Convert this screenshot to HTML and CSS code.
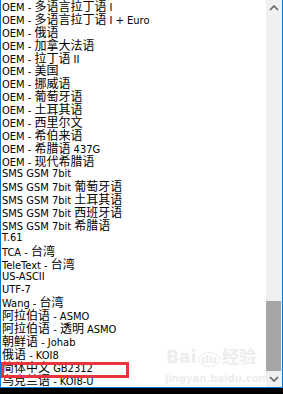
FILE: index.html
```html
<!DOCTYPE html>
<html lang="zh-CN">
<head>
    <meta charset="UTF-8">
    <title>编码列表</title>
    <link rel="stylesheet" href="styles.css">
</head>
<body>
    <div class="dropdown">
        <ul class="options">
            <li>OEM - <span class="zh">多语言拉丁语</span> I</li>
            <li>OEM - <span class="zh">多语言拉丁语</span> I + Euro</li>
            <li>OEM - <span class="zh">俄语</span></li>
            <li>OEM - <span class="zh">加拿大法语</span></li>
            <li>OEM - <span class="zh">拉丁语</span> II</li>
            <li>OEM - <span class="zh">美国</span></li>
            <li>OEM - <span class="zh">挪威语</span></li>
            <li>OEM - <span class="zh">葡萄牙语</span></li>
            <li>OEM - <span class="zh">土耳其语</span></li>
            <li>OEM - <span class="zh">西里尔文</span></li>
            <li>OEM - <span class="zh">希伯来语</span></li>
            <li>OEM - <span class="zh">希腊语</span> 437G</li>
            <li>OEM - <span class="zh">现代希腊语</span></li>
            <li>SMS GSM 7bit</li>
            <li>SMS GSM 7bit <span class="zh">葡萄牙语</span></li>
            <li>SMS GSM 7bit <span class="zh">土耳其语</span></li>
            <li>SMS GSM 7bit <span class="zh">西班牙语</span></li>
            <li>SMS GSM 7bit <span class="zh">希腊语</span></li>
            <li>T.61</li>
            <li>TCA - <span class="zh">台湾</span></li>
            <li>TeleText - <span class="zh">台湾</span></li>
            <li>US-ASCII</li>
            <li>UTF-7</li>
            <li>Wang - <span class="zh">台湾</span></li>
            <li><span class="zh">阿拉伯语</span> - ASMO</li>
            <li><span class="zh">阿拉伯语</span> - <span class="zh">透明</span> ASMO</li>
            <li><span class="zh">朝鲜语</span> - Johab</li>
            <li><span class="zh">俄语</span> - KOI8</li>
            <li><span class="zh">简体中文</span> GB2312</li>
            <li><span class="zh">乌克兰语</span> - KOI8-U</li>
        </ul>
        <div class="scrollbar">
            <div class="arrow">
                <svg width="10" height="6" viewBox="0 0 10 6"><path d="M1 5 L5 1 L9 5" fill="none" stroke="#606060" stroke-width="1.6"/></svg>
            </div>
            <div class="track"></div>
            <div class="thumb"></div>
            <div class="arrow">
                <svg width="10" height="6" viewBox="0 0 10 6"><path d="M1 1 L5 5 L9 1" fill="none" stroke="#606060" stroke-width="1.6"/></svg>
            </div>
        </div>
        <div class="highlight"></div>
        <div class="watermark">
            <div class="wm-logo">Bai<span class="wm-du">du</span>经验</div>
            <div class="wm-url">jingyan.baidu.com</div>
        </div>
    </div>
</body>
</html>
```

FILE: styles.css
```css
body {
    margin: 0;
    background: #000;
    width: 283px;
    height: 394px;
    overflow: hidden;
}

.dropdown {
    position: relative;
    display: flex;
    height: 387px;
    background: #fff;
    border-left: 1px solid #0078d7;
    border-right: 1px solid #0078d7;
    border-bottom: 1px solid #0078d7;
}

.options {
    flex: 1;
    list-style: none;
    margin: 0;
    padding: 0 0 0 1px;
    overflow: hidden;
    font-family: "DejaVu Sans Condensed", "DejaVu Sans", "Noto Sans CJK SC", sans-serif;
    font-size: 11px;
    color: #000;
}

.options li {
    height: 12.9px;
    line-height: 12.9px;
    white-space: nowrap;
}

.zh {
    font-family: "Noto Sans CJK SC", sans-serif;
    font-size: 12px;
    line-height: 12.9px;
}

.scrollbar {
    width: 16px;
    display: flex;
    flex-direction: column;
    background: #f0f0f0;
}

.arrow {
    height: 16px;
    display: flex;
    align-items: center;
    justify-content: center;
}

.track {
    flex: 1;
}

.thumb {
    height: 70px;
    margin: 0 1px 0 0;
    background: #a6a6a6;
}

.highlight {
    position: absolute;
    left: 0;
    top: 362px;
    width: 122px;
    height: 10px;
    border: 3px solid #e8343c;
}

.watermark {
    position: absolute;
    left: 164px;
    top: 340px;
    width: 92px;
    color: #ededed;
    font-family: "DejaVu Sans", "Noto Sans CJK SC", sans-serif;
    text-align: center;
}

.wm-logo {
    font-size: 17px;
    font-weight: bold;
    line-height: 26px;
    padding-top: 4px;
}

.wm-du {
    font-size: 11px;
    border: 1px solid #ededed;
    border-radius: 50%;
    padding: 0 2px;
    margin: 0 2px;
}

.wm-url {
    font-size: 10px;
    font-weight: bold;
    line-height: 12px;
}
```
